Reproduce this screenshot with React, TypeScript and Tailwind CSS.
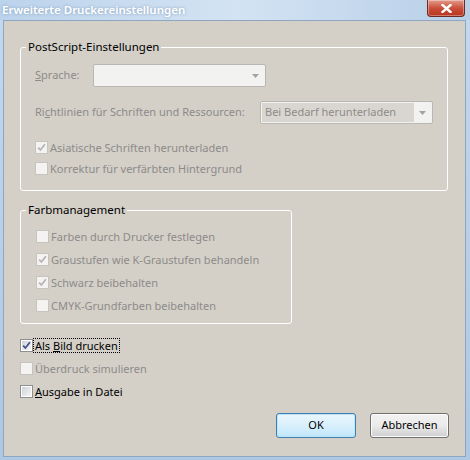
import React from "react";
import clsx from "clsx";

interface CheckProps {
  label: React.ReactNode;
  checked?: boolean;
  disabled?: boolean;
  focused?: boolean;
}

const CheckBox: React.FC<{ checked?: boolean; disabled?: boolean }> = ({ checked, disabled }) => (
  <span
    className={clsx(
      "flex h-[13px] w-[13px] shrink-0 items-center justify-center border",
      disabled ? "border-[#c6c4bf] bg-[#f4f3f1]" : "border-[#8e8f8f] bg-white p-[1px]"
    )}
  >
    <span
      className={clsx(
        "flex h-full w-full items-center justify-center",
        disabled ? "" : "bg-gradient-to-br from-[#cfd3d8] to-[#f6f6f6]"
      )}
    >
      {checked && (
        <svg width="9" height="9" viewBox="0 0 9 9">
          <path
            d="M1.2 4.6 L3.4 7 L7.9 1.2"
            fill="none"
            stroke={disabled ? "#b4b4b4" : "#3f5089"}
            strokeWidth="1.7"
          />
        </svg>
      )}
    </span>
  </span>
);

const Check: React.FC<CheckProps & { h?: string }> = ({ label, checked, disabled, focused, h = "h-[21px]" }) => (
  <div className={clsx("flex items-center", h)}>
    <CheckBox checked={checked} disabled={disabled} />
    <span
      className={clsx(
        "whitespace-nowrap px-[1px] leading-[13px]",
        disabled ? "text-[#8d8b88]" : "text-black",
        focused ? "border border-dotted border-black" : "border border-transparent"
      )}
    >
      {label}
    </span>
  </div>
);

const Select: React.FC<{ value?: string; width: string }> = ({ value, width }) => (
  <div className={clsx("flex h-[23px] shrink-0 items-stretch rounded-[2px] border border-[#b9b7b3] bg-[#f2f2f1] p-[1px]", width)}>
    <div className={clsx("flex flex-1 items-center whitespace-nowrap px-[3px] text-[#8d8b88]", value ? "bg-[#d9d6d1]" : "")}>
      {value}
    </div>
    <div className="flex w-[17px] items-center justify-center">
      <svg width="7" height="4" viewBox="0 0 7 4">
        <path d="M0 0 H7 L3.5 4 Z" fill="#a3a3a3" />
      </svg>
    </div>
  </div>
);

export default function App() {
  return (
    <div className="flex h-[460px] w-[470px] flex-col bg-gradient-to-b from-[#c4d8ee] to-[#aec7e2] font-['Segoe_UI','Noto_Sans',sans-serif] text-[11px]">
      {/* Titelleiste */}
      <div className="flex h-[20px] shrink-0 items-start justify-between bg-gradient-to-r from-[#bcd3ec] via-[#d3e3f3] to-[#b8cfe8]">
        <span className="pl-[2px] pt-[2px] text-[11.5px] leading-[16px] font-semibold text-white [text-shadow:0_0_3px_rgba(120,150,180,0.9)]">
          Erweiterte Druckereinstellungen
        </span>
        <div className="mr-[5px] flex h-[17px] w-[38px] items-center justify-center rounded-b-[4px] border border-t-0 border-[#6b2a22] bg-gradient-to-b from-[#e49a8c] via-[#c9503c] to-[#b8341c] shadow-[inset_0_0_0_1px_rgba(255,255,255,0.35)]">
          <svg width="11" height="9" viewBox="0 0 11 9">
            <path d="M1.5 1 L9.5 8 M9.5 1 L1.5 8" stroke="white" strokeWidth="2.4" strokeLinecap="square" />
          </svg>
        </div>
      </div>

      {/* Inhalt */}
      <div className="mb-[3px] ml-[3px] mr-[4px] flex flex-1 flex-col border border-[#8fa6c0] bg-[#d4d0c8] pl-[16px] pr-[16px]">
        <fieldset className="mt-[18px] w-[428px] rounded-[3px] border border-white px-[14px] pb-[11px] pt-[9px]">
          <legend className="-ml-[9px] px-[2px] text-[11.5px] leading-[16px] text-black">PostScript-Einstellungen</legend>
          <div className="flex h-[23px] items-center">
            <span className="w-[58px] text-[#8d8b88]">
              <span className="underline">S</span>prache:
            </span>
            <Select width="w-[173px]" />
          </div>
          <div className="mt-[14px] flex h-[23px] items-center justify-between">
            <span className="whitespace-nowrap text-[#8d8b88]">
              Ri<span className="underline">c</span>htlinien für Schriften und Ressourcen:
            </span>
            <Select width="w-[173px]" value="Bei Bedarf herunterladen" />
          </div>
          <div className="mt-[13px]">
            <Check checked disabled label="Asiatische Schriften herunterladen" />
            <Check disabled label="Korrektur für verfärbten Hintergrund" />
          </div>
        </fieldset>

        <fieldset className="mt-[11px] w-[272px] rounded-[3px] border border-white px-[15px] pb-[6px] pt-[7px]">
          <legend className="-ml-[10px] px-[2px] text-[11.5px] leading-[16px] text-black">Farbmanagement</legend>
          <Check h="h-[23px]" disabled label="Farben durch Drucker festlegen" />
          <Check h="h-[23px]" checked disabled label="Graustufen wie K-Graustufen behandeln" />
          <Check h="h-[23px]" checked disabled label="Schwarz beibehalten" />
          <Check h="h-[23px]" disabled label="CMYK-Grundfarben beibehalten" />
        </fieldset>

        <div className="mt-[10px]">
          <Check
            h="h-[23px]"
            checked
            focused
            label={
              <>
                Als <span className="underline">B</span>ild drucken
              </>
            }
          />
          <Check h="h-[23px]" disabled label="Überdruck simulieren" />
          <Check
            h="h-[23px]"
            label={
              <>
                <span className="underline">A</span>usgabe in Datei
              </>
            }
          />
        </div>

        <div className="mt-[10px] flex justify-end gap-[14px]">
          <button className="h-[25px] w-[80px] rounded-[3px] border border-[#3c7fb1] bg-gradient-to-b from-[#eaf6fd] via-[#d9f0fc] to-[#bee6fd] text-black shadow-[inset_0_0_0_1px_#bfe3f7]">
            OK
          </button>
          <button className="h-[25px] w-[79px] rounded-[3px] border border-[#707070] bg-gradient-to-b from-[#f2f2f2] via-[#ebebeb] to-[#cfcfcf] text-black shadow-[inset_0_0_0_1px_#fcfcfc]">
            Abbrechen
          </button>
        </div>
      </div>
    </div>
  );
}
